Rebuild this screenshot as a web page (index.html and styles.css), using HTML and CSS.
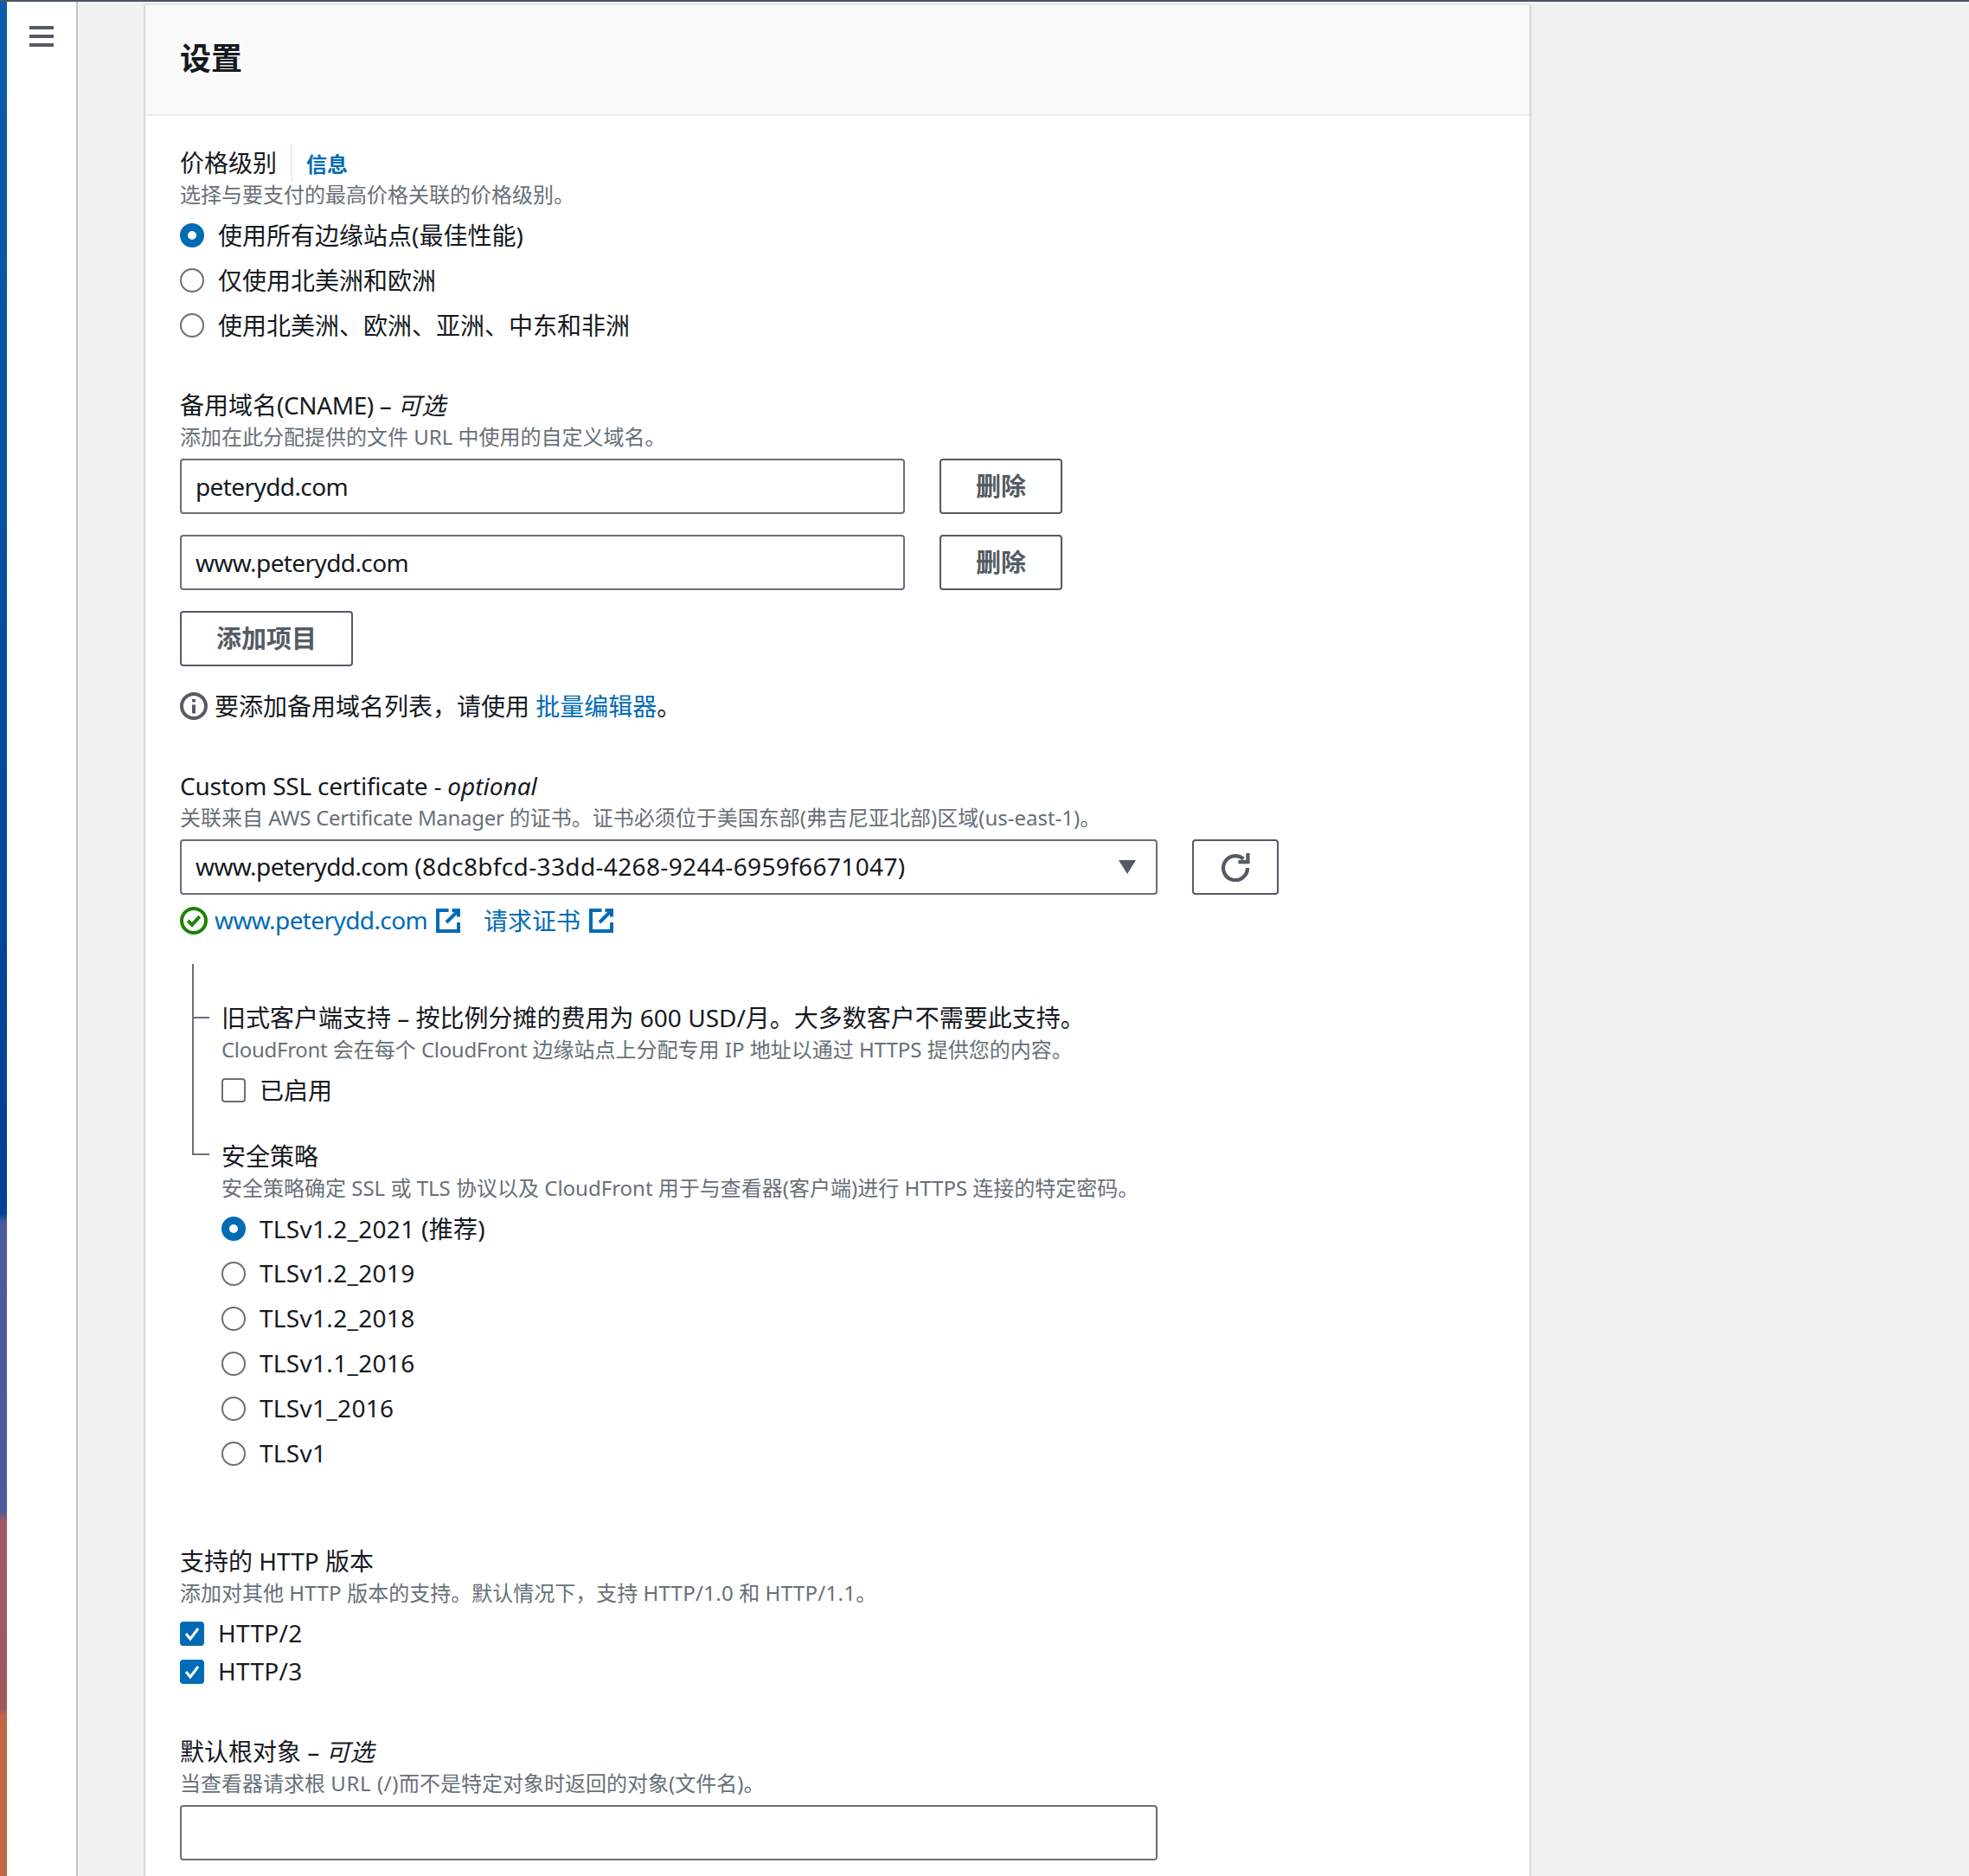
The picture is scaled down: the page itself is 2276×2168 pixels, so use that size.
FILE: index.html
```html
<!DOCTYPE html>
<html lang="zh-CN">
<head>
<meta charset="utf-8">
<title>设置</title>
<link rel="stylesheet" href="styles.css">
</head>
<body>
<div class="topbar"></div>
<div class="page">
  <div class="strip"></div>
  <aside class="sidebar">
    <svg class="burger" viewBox="0 0 28 24" aria-hidden="true"><path d="M0 2h28M0 12h28M0 22h28"/></svg>
  </aside>
  <main class="main">
    <section class="card">
      <header class="card-head"><h2>设置</h2></header>
      <div class="card-body">

        <div class="label-row">
          <span class="label">价格级别</span><span class="sep"></span><a class="info">信息</a>
        </div>
        <p class="desc">选择与要支付的最高价格关联的价格级别。</p>
        <div class="group">
          <label class="opt"><span class="radio on"></span>使用所有边缘站点(最佳性能)</label>
          <label class="opt"><span class="radio"></span>仅使用北美洲和欧洲</label>
          <label class="opt"><span class="radio"></span>使用北美洲、欧洲、亚洲、中东和非洲</label>
        </div>

        <div class="label s-cname">备用域名<span class="ls-c">(CNAME) – </span><i>可选</i></div>
        <p class="desc">添加在此分配提供的文件 URL 中使用的自定义域名。</p>
        <div class="row first">
          <div class="input w-short"><span class="ls-a">peterydd.com</span></div>
          <button class="btn w-del">删除</button>
        </div>
        <div class="row">
          <div class="input w-short"><span class="ls-a">www.peterydd.com</span></div>
          <button class="btn w-del">删除</button>
        </div>
        <div class="row">
          <button class="btn w-add">添加项目</button>
        </div>
        <div class="note">
          <svg class="icon32 grey" viewBox="0 0 16 16" aria-hidden="true"><circle cx="8" cy="8" r="7"/><path d="M8 7.2v5"/><path d="M8 4v1.7"/></svg>
          <span class="lift">要添加备用域名列表，请使用 <a class="link">批量编辑器</a>。</span>
        </div>

        <div class="label s-ssl"><span class="ls-b">Custom SSL certificate - </span><i>optional</i></div>
        <p class="desc">关联来自 <span class="ls-h">AWS Certificate Manager</span> 的证书。证书必须位于美国东部(弗吉尼亚北部)区域(us-east-1)。</p>
        <div class="row first wide-gap">
          <div class="input w-long select">
            <span class="lift"><span class="ls-a">www.peterydd.com</span> <span class="ls-d">(8dc8bfcd-33dd-4268-9244-6959f6671047)</span></span>
            <svg class="caret" viewBox="0 0 20 16" aria-hidden="true"><path d="M0 0h20L10 16z"/></svg>
          </div>
          <button class="btn w-ref">
            <svg class="refresh" viewBox="0 0 16 16" aria-hidden="true"><path d="M14.6 8.5a6.6 6.6 0 1 1-2.2-4.9"/><path d="M14.8 0.5v4.7H9.6"/></svg>
          </button>
        </div>
        <div class="links">
          <svg class="icon32 green" viewBox="0 0 16 16" aria-hidden="true"><circle cx="8" cy="8" r="7"/><path d="M4.6 8l2.4 2.4 4.4-4.8"/></svg>
          <a class="link l-a lift ls-a">www.peterydd.com</a>
          <svg class="ext" viewBox="0 0 28 28" aria-hidden="true"><path d="M14.5 2H2v24h24V16"/><path d="M18.5 2H26v7.5M26 2L12 16"/></svg>
          <a class="link l-b lift">请求证书</a>
          <svg class="ext" viewBox="0 0 28 28" aria-hidden="true"><path d="M14.5 2H2v24h24V16"/><path d="M18.5 2H26v7.5M26 2L12 16"/></svg>
        </div>

        <div class="nested">
          <span class="tree-v"></span><span class="tree-h one"></span><span class="tree-h two"></span>
          <div class="label n-first">旧式客户端支持 – 按比例分摊的费用为 600 USD/月。大多数客户不需要此支持。</div>
          <p class="desc"><span class="ls-e">CloudFront</span> 会在每个 <span class="ls-e">CloudFront</span> 边缘站点上分配专用 IP 地址以通过 HTTPS 提供您的内容。</p>
          <div class="group">
            <label class="opt"><span class="check"></span>已启用</label>
          </div>
          <div class="label n-second">安全策略</div>
          <p class="desc">安全策略确定 SSL 或 TLS 协议以及 CloudFront 用于与查看器(客户端)进行 HTTPS 连接的特定密码。</p>
          <div class="group wide">
            <label class="opt"><span class="radio on"></span>TLSv1.2_2021 (推荐)</label>
            <label class="opt"><span class="radio"></span>TLSv1.2_2019</label>
            <label class="opt"><span class="radio"></span>TLSv1.2_2018</label>
            <label class="opt"><span class="radio"></span>TLSv1.1_2016</label>
            <label class="opt"><span class="radio"></span>TLSv1_2016</label>
            <label class="opt"><span class="radio"></span>TLSv1</label>
          </div>
        </div>

        <div class="label s-http">支持的 HTTP 版本</div>
        <p class="desc">添加对其他 <span class="ls-f">HTTP</span> 版本的支持。默认情况下，支持 <span class="ls-f">HTTP/1.0</span> 和 <span class="ls-f">HTTP/1.1</span>。</p>
        <div class="group tight">
          <label class="opt short"><span class="check on"><svg viewBox="0 0 28 28" aria-hidden="true"><path d="M7 14l5 6 9-12"/></svg></span><span class="ls-f">HTTP/2</span></label>
          <label class="opt short"><span class="check on"><svg viewBox="0 0 28 28" aria-hidden="true"><path d="M7 14l5 6 9-12"/></svg></span><span class="ls-f">HTTP/3</span></label>
        </div>

        <div class="label s-root">默认根对象 – <i>可选</i></div>
        <p class="desc">当查看器请求根 <span class="ls-g">URL (/)</span>而不是特定对象时返回的对象(文件名)。</p>
        <div class="row first">
          <div class="input w-long"></div>
        </div>
      </div>
    </section>
  </main>
</div>
</body>
</html>
```
FILE: styles.css
```css
* { box-sizing: border-box; }
html, body { margin: 0; height: 100%; }
body {
  background: #f0f2f1;
  color: #16191f;
  font-family: "Noto Sans", "Noto Sans CJK SC", sans-serif;
  font-size: 28px;
  overflow: hidden;
}
.topbar { height: 2px; background: #4a5560; }
.page { display: flex; height: 2166px; }
.strip {
  width: 8px;
  flex: none;
  background: linear-gradient(180deg, #0a5cab 0, #003f92 1400px, #4a5a9a 1410px, #50589a 1745px, #a05a62 1755px, #a0585f 1972px, #c06745 1982px, #c06745 100%);
}
.sidebar {
  width: 82px;
  flex: none;
  background: #fff;
  border-right: 2px solid #bfc4c6;
  padding: 28px 0 0 26px;
}
.burger { display: block; width: 28px; height: 24px; fill: none; stroke: #545b64; stroke-width: 4; }
.main { flex: 1; padding: 4px 0 0 78px; }
.card {
  width: 1600px;
  height: 2170px;
  background: #fff;
  box-shadow: 0 -2px 2px #e6e9e9, 1px 0 2px #b5babc, -1px 0 2px #b5babc;
}
.card-head {
  height: 128px;
  padding: 0 0 3px 40px;
  background: #fafafa;
  border-bottom: 2px solid #eaeded;
  display: flex;
  align-items: center;
}
.card-head h2 { margin: 0; font-size: 36px; font-weight: 700; line-height: 44px; }
.card-body { padding: 35px 40px 0; }
.label { line-height: 38px; }
.label i { font-style: italic; }
.label-row { display: flex; align-items: center; height: 38px; }
.sep { width: 2px; height: 44px; background: #eaeded; margin: 0 16px 0 16px; }
.info { color: #006bb5; font-size: 24px; font-weight: 700; }
.desc { margin: 0; color: #687078; font-size: 24px; line-height: 36px; white-space: nowrap; }
.group { margin-top: 3px; }
.group.wide { letter-spacing: .3px; }
.opt { display: flex; align-items: center; height: 52px; padding-bottom: 3px; }
.opt.short { height: 44px; }
.group.tight { margin-top: 7px; }
.radio, .check { flex: none; width: 28px; height: 28px; margin: 3px 16px 0 0; background: #fff; border: 2px solid #687078; }
.radio { border-radius: 50%; }
.radio.on { border: 9px solid #006bb5; }
.check { border-radius: 4px; }
.check.on { background: #006bb5; border-color: #006bb5; position: relative; }
.check svg { position: absolute; inset: -2px; width: 28px; height: 28px; fill: none; stroke: #fff; stroke-width: 3; }
.s-cname { margin-top: 47px; }
.s-ssl { margin-top: 53px; }
.s-http { margin-top: 79px; }
.s-root { margin-top: 51px; }
.row { display: flex; gap: 40px; margin-top: 24px; }
.row.first { margin-top: 7px; }
.row.wide-gap { margin-top: 7px; }
.input {
  height: 64px;
  background: #fff;
  border: 2px solid #687078;
  border-radius: 4px;
  padding: 0 16px;
  display: flex;
  align-items: center;
  justify-content: space-between;
  white-space: nowrap;
}
.w-short { width: 838px; }
.w-long { width: 1130px; }
.caret { width: 20px; height: 16px; fill: #545b64; margin-right: 7px; }
.btn {
  height: 64px;
  padding: 0 0 5px;
  background: #fff;
  border: 2px solid #545b64;
  border-radius: 4px;
  color: #545b64;
  font: 700 29px "Noto Sans", "Noto Sans CJK SC", sans-serif;
  display: flex;
  align-items: center;
  justify-content: center;
}
.w-del { width: 142px; }
.w-add { width: 200px; }
.w-ref { width: 100px; padding: 0; }
.refresh { width: 34px; height: 34px; fill: none; stroke: #545b64; stroke-width: 2; }
.note { display: flex; align-items: center; gap: 8px; height: 40px; margin-top: 26px; }
.lift { padding-bottom: 3px; }
.icon32 { flex: none; width: 32px; height: 32px; fill: none; stroke-width: 2; }
.icon32.grey { stroke: #545b64; }
.icon32.green { stroke: #1d8102; }
.link { color: #006bb5; }
.links { display: flex; align-items: center; height: 40px; margin-top: 10px; }
.l-a { margin-left: 8px; }
.l-b { margin-left: 27px; }
.ext { flex: none; width: 28px; height: 28px; margin-left: 10px; fill: none; stroke: #006bb5; stroke-width: 4; }
.ls-a { letter-spacing: -.6px; }
.ls-b { letter-spacing: -.24px; }
.ls-c { letter-spacing: -.4px; }
.ls-d { letter-spacing: .36px; }
.ls-e { letter-spacing: -.3px; }
.ls-f { letter-spacing: .3px; }
.ls-g { letter-spacing: .6px; }
.ls-h { letter-spacing: -.3px; }
.nested { position: relative; margin-top: 30px; padding: 43px 0 0 48px; }
.tree-v { position: absolute; left: 14px; top: 0; width: 2px; height: 221px; background: #687078; }
.tree-h { position: absolute; left: 14px; width: 20px; height: 2px; background: #687078; }
.tree-h.one { top: 61px; }
.tree-h.two { top: 219px; }
.n-second { margin-top: 31px; }
```
